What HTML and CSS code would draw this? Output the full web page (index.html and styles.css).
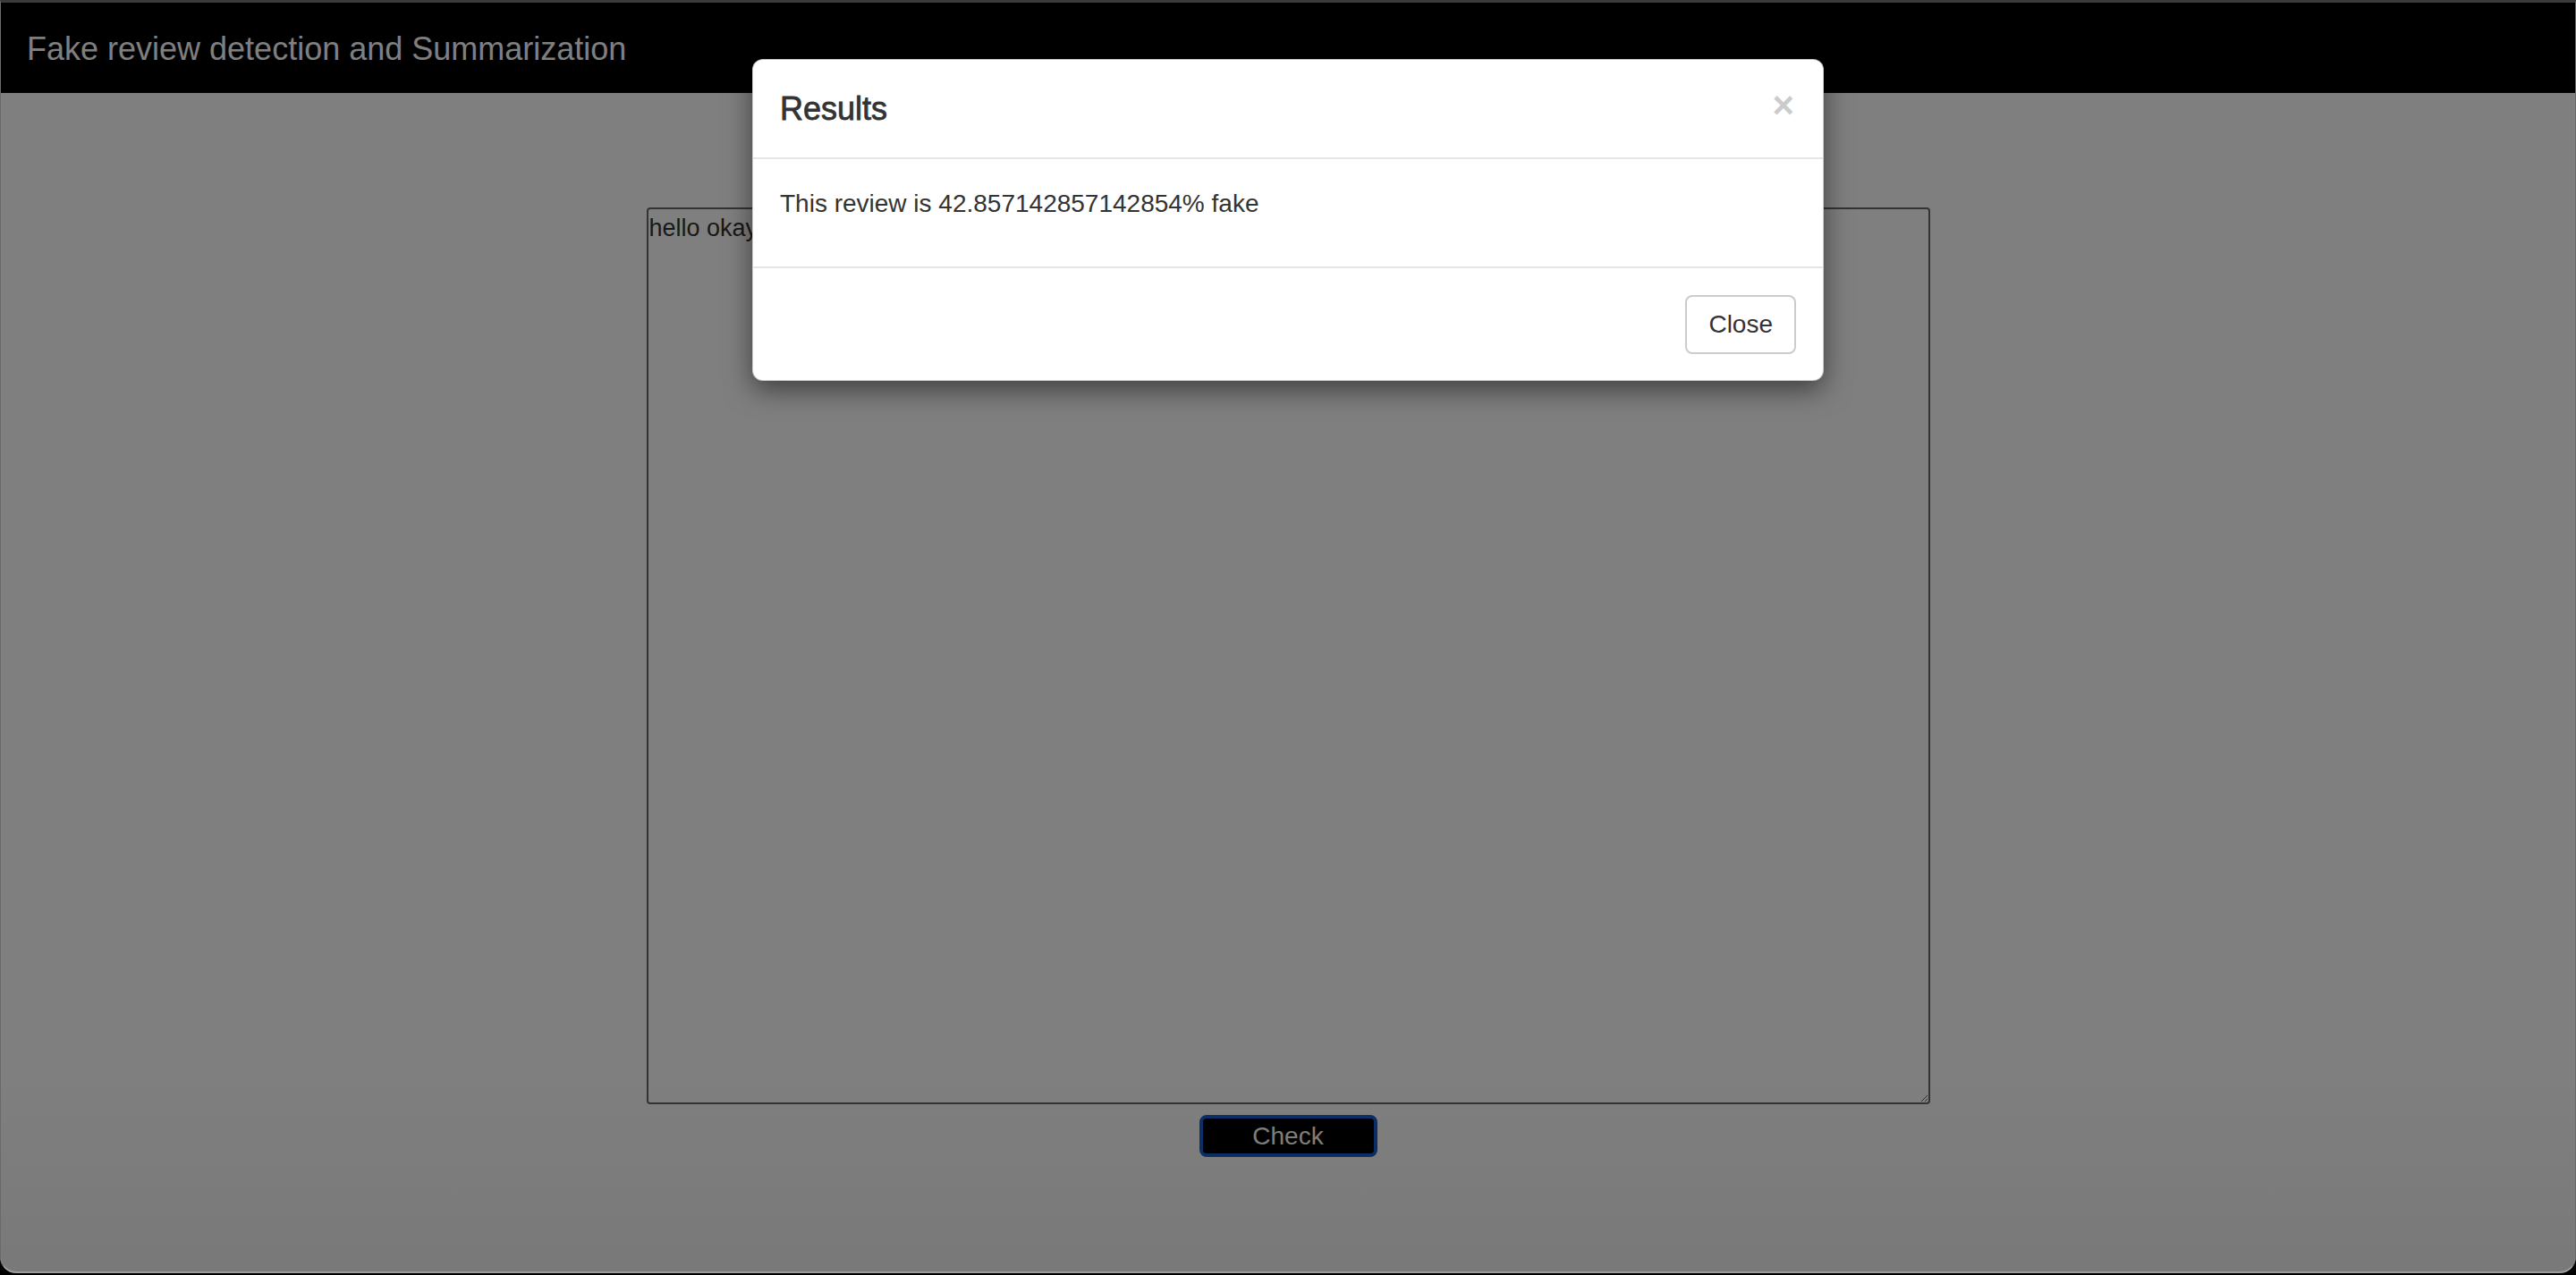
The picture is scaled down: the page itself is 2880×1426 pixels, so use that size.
FILE: index.html
```html
<!DOCTYPE html>
<html lang="en">
<head>
<meta charset="utf-8">
<title>Fake review detection and Summarization</title>
<link rel="stylesheet" href="styles.css">
</head>
<body>
<div class="window">
  <nav class="navbar">
    <span class="brand">Fake review detection and Summarization</span>
  </nav>
  <main class="main">
    <form class="review-form">
      <textarea class="review-input">hello okay</textarea>
      <button type="button" class="check-btn">Check</button>
    </form>
  </main>
  <div class="backdrop"></div>
  <div class="modal">
    <div class="modal-content">
      <div class="modal-header">
        <span class="close">&times;</span>
        <h4 class="modal-title">Results</h4>
      </div>
      <div class="modal-body">
        <p>This review is 42.857142857142854% fake</p>
      </div>
      <div class="modal-footer">
        <button type="button" class="btn-close">Close</button>
      </div>
    </div>
  </div>
</div>
</body>
</html>
```

FILE: styles.css
```css
* { box-sizing: border-box; }
html, body { margin: 0; padding: 0; }
body {
  background: #000;
  font-family: "Liberation Sans", Arial, Helvetica, sans-serif;
  color: #333;
  width: 2880px;
  height: 1426px;
  overflow: hidden;
}
.window {
  position: relative;
  height: 1424px;
  background: #fff;
  border-top: 3px solid #3a3a3a;
  border-left: 1px solid #6a6a6a;
  border-right: 1px solid #6a6a6a;
  border-bottom: 2px solid #9c9c9c;
  border-radius: 0 0 18px 18px;
  overflow: hidden;
}
.navbar {
  height: 101px;
  background: #000;
  border-bottom: 1px solid #080808;
  display: flex;
  align-items: flex-start;
  padding: 32px 0 0 29px;
}
.brand {
  color: #fff;
  font-size: 36px;
  line-height: 40px;
}
.main {
  padding-top: 128px;
}
.review-form {
  display: flex;
  flex-direction: column;
  align-items: center;
}
.review-input {
  display: block;
  width: 1435px;
  height: 1003px;
  border: 2px solid #666;
  border-radius: 4px;
  padding: 5px 1px 2px;
  margin: 0;
  font-family: "Liberation Sans", Arial, Helvetica, sans-serif;
  font-size: 27px;
  line-height: 32px;
  color: #333;
  background: #fff;
}
.check-btn {
  margin-top: 12px;
  width: 199px;
  height: 47px;
  background: #000;
  color: #fff;
  border: 4px solid #155ecc;
  border-radius: 8px;
  font-family: "Liberation Sans", Arial, Helvetica, sans-serif;
  font-size: 28px;
  line-height: 38px;
  padding: 0;
}
.backdrop {
  position: absolute;
  inset: 0;
  background: rgba(0, 0, 0, 0.5);
}
.backdrop::after {
  content: "";
  position: absolute;
  left: 0;
  right: 0;
  bottom: 0;
  height: 220px;
  background: linear-gradient(to bottom, rgba(0,0,0,0), rgba(0,0,0,0.05));
}
.modal {
  position: absolute;
  top: 63px;
  left: 0;
  right: 0;
  margin: 0 auto;
  width: 1198px;
}
.modal-content {
  background: #fff;
  border: 1px solid rgba(0, 0, 0, 0.2);
  border-radius: 12px;
  box-shadow: 0 10px 30px rgba(0, 0, 0, 0.5);
}
.modal-header {
  padding: 30px 30px 29px 30px;
  border-bottom: 2px solid #e5e5e5;
  display: flex;
  flex-direction: row-reverse;
  justify-content: space-between;
  align-items: flex-start;
}
.modal-title {
  margin: 0;
  font-size: 36px;
  line-height: 50px;
  font-weight: 500;
  color: #333;
  -webkit-text-stroke: 0.8px #333;
}
.close {
  font-size: 42px;
  font-weight: bold;
  line-height: 1;
  color: #000;
  opacity: 0.2;
  margin-top: 0px;
  margin-right: 2px;
}
.modal-body {
  padding: 30px 30px 30px;
}
.modal-body p {
  margin: 0 0 20px;
  font-size: 28px;
  line-height: 40px;
  color: #333;
}
.modal-footer {
  padding: 30px 30px 29px;
  border-top: 2px solid #e5e5e5;
  display: flex;
  justify-content: flex-end;
}
.btn-close {
  height: 66px;
  padding: 0 24px;
  font-family: "Liberation Sans", Arial, Helvetica, sans-serif;
  font-size: 28px;
  line-height: 40px;
  color: #333;
  background: #fff;
  border: 2px solid #ccc;
  border-radius: 8px;
}
```
